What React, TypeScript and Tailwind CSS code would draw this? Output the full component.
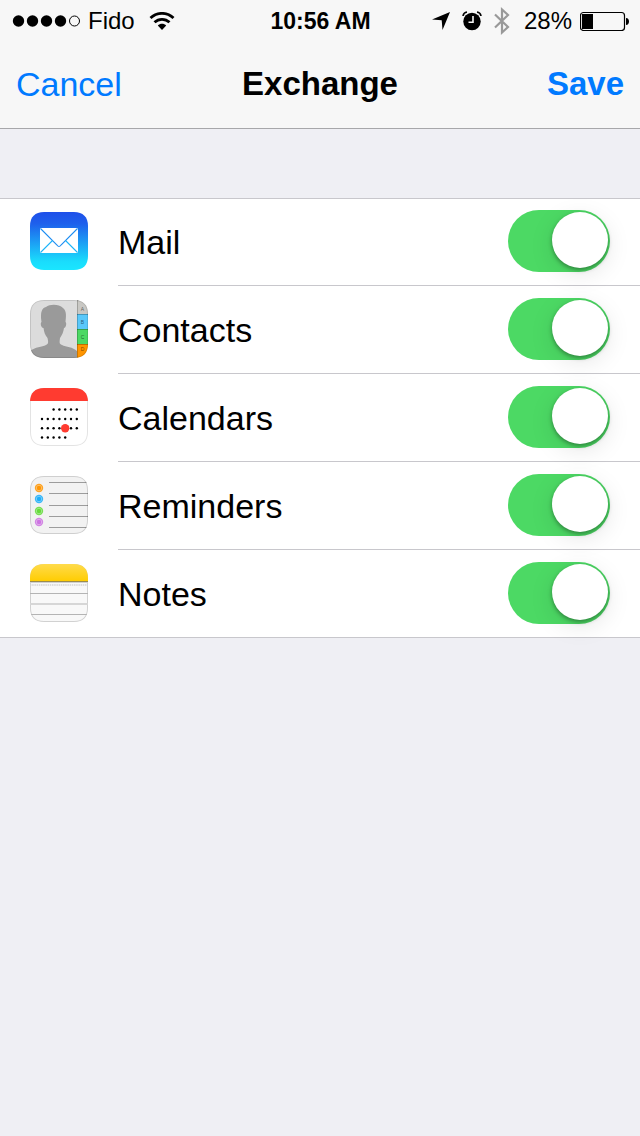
import React from "react";

const TILE =
  "M14 0H44C53 0 58 5 58 14V44C58 53 53 58 44 58H14C5 58 0 53 0 44V14C0 5 5 0 14 0Z";

type TileProps = {
  id: string;
  children: React.ReactNode;
  outline?: string;
};

function Tile({ id, children, outline }: TileProps) {
  return (
    <svg viewBox="0 0 58 58" className="size-[58px]" aria-hidden="true">
      <defs>
        <clipPath id={`${id}-clip`}>
          <path d={TILE} />
        </clipPath>
      </defs>
      <g clipPath={`url(#${id}-clip)`}>
        {children}
        {outline && <path d={TILE} fill="none" stroke={outline} strokeWidth="2" />}
      </g>
    </svg>
  );
}

function MailIcon() {
  return (
    <Tile id="mail">
      <linearGradient id="mail-sky" x1="0" y1="0" x2="0" y2="1">
        <stop offset="0" stopColor="#1e4fe9" />
        <stop offset="0.2" stopColor="#1e60ec" />
        <stop offset="0.85" stopColor="#1adcfc" />
        <stop offset="1" stopColor="#1ae6ff" />
      </linearGradient>
      <rect width="58" height="58" fill="url(#mail-sky)" />
      <rect x="10" y="16" width="38" height="25" rx="1" fill="#fff" />
      <g fill="none" strokeWidth="1.1">
        <path d="M10.5 16.500L27 33Q29 36 31 33L47.500 16.500" stroke="#1f8ef2" />
        <path d="M10.500 40.500L22.500 28.500M47.500 40.500L35.500 28.500" stroke="#1db4f8" />
      </g>
    </Tile>
  );
}

const contactTabs = [
  { letter: "A", y: 0, height: 14, fill: "#c9c8c4", baseline: 11 },
  { letter: "B", y: 14, height: 15, fill: "#5ac8fa", baseline: 24 },
  { letter: "C", y: 29, height: 15, fill: "#4cd964", baseline: 39 },
  { letter: "D", y: 44, height: 14, fill: "#ff9500", baseline: 51 },
];

function ContactsIcon() {
  return (
    <Tile id="contacts" outline="#0000001c">
      <rect width="58" height="58" fill="#dcdcdc" />
      <path
        d="M0 58V51C5 47 12 47 16 45C18.500 44 18.500 42 17.500 38C15 35 14 32 13.500 28C11 28 10 23 11.500 22C10 12 12 8 16 7C20 4 29 4 33 8C37 11 36 17 35.500 22C37 23 36 28 34 28C33.500 32 32 35 30 38C29.500 42 29 44 32 45C36 47 43 47 47 51V58Z"
        fill="#9a9a9a"
      />
      {contactTabs.map((tab) => (
        <g key={tab.letter}>
          <rect x="47" y={tab.y} width="11" height={tab.height} fill={tab.fill} />
          <rect x="47" y={tab.y} width="11" height="1" fill="#00000040" />
          <text
            x="52.500"
            y={tab.baseline}
            fontSize="5"
            textAnchor="middle"
            fill="#00000090"
          >
            {tab.letter}
          </text>
        </g>
      ))}
      <rect x="47" width="1" height="58" fill="#00000033" />
    </Tile>
  );
}

// first and last day column of each week
const calendarWeeks = [
  { y: 21.5, from: 2, to: 6 },
  { y: 31, from: 0, to: 6 },
  { y: 40.3, from: 0, to: 6 },
  { y: 49.5, from: 0, to: 4 },
];

function CalendarsIcon() {
  return (
    <Tile id="calendars">
      <rect width="58" height="58" fill="#fff" />
      <path d={TILE} fill="none" stroke="#0000001c" strokeWidth="2" />
      <rect width="58" height="13" fill="#ff3b30" />
      {calendarWeeks.map((week) =>
        Array.from({ length: week.to - week.from + 1 }, (_, i) => (
          <circle
            key={`${week.y}-${i}`}
            cx={12 + (week.from + i) * 5.8}
            cy={week.y}
            r="1.2"
            fill="#000"
          />
        ))
      )}
      <circle cx="35.200" cy="40.300" r="4.200" fill="#ff3b30" />
    </Tile>
  );
}

const reminderDots = [
  { y: 12, fill: "#ff9500" },
  { y: 23, fill: "#1badf8" },
  { y: 35, fill: "#63da38" },
  { y: 46, fill: "#cc73e1" },
];

function RemindersIcon() {
  return (
    <Tile id="reminders" outline="#00000024">
      <rect width="58" height="58" fill="#f2f2f2" />
      {[6, 17, 29, 40, 51].map((y) => (
        <rect key={y} x="19" y={y} width="39" height="1" fill="#9c9c9c" />
      ))}
      {reminderDots.map((dot) => (
        <g key={dot.y} fill={dot.fill}>
          <circle cx="9" cy={dot.y} r="4.200" opacity="0.85" />
          <circle cx="9" cy={dot.y} r="2.600" fill="none" stroke="#fff" strokeWidth="0.700" opacity="0.5" />
          <circle cx="9" cy={dot.y} r="2.200" opacity="0.9" />
        </g>
      ))}
    </Tile>
  );
}

function NotesIcon() {
  return (
    <Tile id="notes">
      <linearGradient id="notes-pad" x1="0" y1="0" x2="0" y2="1">
        <stop offset="0" stopColor="#ffdb4c" />
        <stop offset="1" stopColor="#ffcd02" />
      </linearGradient>
      <rect width="58" height="58" fill="#f8f8f8" />
      <path d={TILE} fill="none" stroke="#00000028" strokeWidth="2" />
      <rect width="58" height="17" fill="url(#notes-pad)" />
      <rect y="17" width="58" height="1" fill="#9b8c4e" />
      <rect y="18" width="58" height="1" fill="#d0d0d0" />
      <path d="M0 21H58" stroke="#d4d4d4" strokeWidth="1.500" strokeDasharray="1.500 0.700" />
      <rect y="29" width="58" height="1" fill="#b4b4b4" />
      <rect y="39" width="58" height="2" fill="#d6d6d6" />
      <rect y="50" width="58" height="1" fill="#b4b4b4" />
    </Tile>
  );
}

function SignalDots() {
  return (
    <svg viewBox="0 0 68 12" className="h-3 w-[68px]" role="img" aria-label="Signal strength">
      {[6.5, 20.5, 34.5, 48.5].map((cx) => (
        <circle key={cx} cx={cx} cy="6" r="5.700" />
      ))}
      <circle cx="62.500" cy="6" r="5" fill="none" stroke="#000" />
    </svg>
  );
}

function WifiIcon() {
  return (
    <svg viewBox="0 0 26 18" className="h-[18px] w-[26px]" role="img" aria-label="Wi-Fi">
      <g fill="none" stroke="#000" strokeWidth="2.800">
        <path d="M1.500 6C8 -0.200 18 -0.200 24.500 6" />
        <path d="M5.500 10.300C9.800 6.300 16.200 6.300 20.500 10.300" />
      </g>
      <path d="M13 18L8.800 13.400C11 11.200 15 11.200 17.200 13.400Z" />
    </svg>
  );
}

function LocationIcon() {
  return (
    <svg viewBox="0 0 18 18" className="size-[18px]" role="img" aria-label="Location">
      <path d="M18 0L10.500 18L9.700 8.300L0 7.500Z" />
    </svg>
  );
}

function AlarmIcon() {
  return (
    <svg viewBox="0 0 20 20" className="size-5" role="img" aria-label="Alarm">
      <circle cx="10" cy="10.500" r="8.700" />
      <path d="M1 5C1.300 3 3 1.300 5 1M19 5C18.700 3 17 1.300 15 1" fill="none" stroke="#000" strokeWidth="1.600" />
      <path d="M11 5V11.300H6.500" fill="none" stroke="#f7f7f7" strokeWidth="1.600" />
    </svg>
  );
}

function BluetoothIcon() {
  return (
    <svg viewBox="0 0 16 28" className="h-7 w-4" role="img" aria-label="Bluetooth">
      <path
        d="M1 7.500L14 20L8 25.500V2.500L14 8L1 20.500"
        fill="none"
        stroke="#999"
        strokeWidth="2.200"
      />
    </svg>
  );
}

function BatteryIcon() {
  return (
    <svg viewBox="0 0 49 20" className="h-5 w-[49px]" role="img" aria-label="Battery">
      <rect x="0.500" y="1.500" width="44" height="18" rx="3" fill="none" stroke="#000" strokeWidth="1.200" />
      <rect x="2" y="3" width="11" height="15" />
      <path d="M46 7C50 7 50 14 46 14Z" />
    </svg>
  );
}

function StatusBar() {
  return (
    <div className="grid h-10 grid-cols-[1fr_auto_1fr] items-center pl-3 pr-[11px] pt-px text-2xl/10">
      <div className="flex items-center">
        <SignalDots />
        <span className="ml-2">Fido</span>
        <span className="ml-3.5">
          <WifiIcon />
        </span>
      </div>
      <time className="text-[23px]/10 font-bold">10:56 AM</time>
      <div className="flex items-center justify-end">
        <LocationIcon />
        <span className="ml-3">
          <AlarmIcon />
        </span>
        <span className="ml-3">
          <BluetoothIcon />
        </span>
        <span className="ml-3.5">28%</span>
        <span className="ml-2">
          <BatteryIcon />
        </span>
      </div>
    </div>
  );
}

function NavBar() {
  return (
    <div className="grid h-[88px] grid-cols-[1fr_auto_1fr] items-center px-4 text-[34px]/10">
      <button type="button" className="justify-self-start text-[#007aff]">
        Cancel
      </button>
      <h1 className="text-[33px]/10 font-bold">Exchange</h1>
      <button type="button" className="justify-self-end text-[33px]/10 font-bold text-[#007aff]">
        Save
      </button>
    </div>
  );
}

const services = [
  { id: "mail", label: "Mail", icon: <MailIcon /> },
  { id: "contacts", label: "Contacts", icon: <ContactsIcon /> },
  { id: "calendars", label: "Calendars", icon: <CalendarsIcon /> },
  { id: "reminders", label: "Reminders", icon: <RemindersIcon /> },
  { id: "notes", label: "Notes", icon: <NotesIcon /> },
];

function App() {
  return (
    <div className="min-h-screen bg-[#efeff4] font-['Liberation_Sans',Arial,sans-serif] text-black">
      <header className="border-b border-[#a7a7aa] bg-[#f7f7f7]">
        <StatusBar />
        <NavBar />
      </header>
      <main className="pt-[69px]">
        <ul className="bg-white shadow-[inset_0_1px_0_#c8c7cc,inset_0_-1px_0_#c8c7cc]">
          {services.map((service) => (
            <li key={service.id} className="group flex h-[88px] pl-[30px]">
              <div className="flex items-center pb-0.5">{service.icon}</div>
              <div className="ml-[30px] flex grow items-center justify-between border-b border-[#c8c7cc] pb-px pr-[30px] group-last:border-transparent">
                <label htmlFor={service.id} className="pt-0.5 text-[34px]/10">
                  {service.label}
                </label>
                <input
                  id={service.id}
                  type="checkbox"
                  role="switch"
                  defaultChecked
                  className="h-[62px] w-[102px] appearance-none rounded-full bg-[#e5e5ea] p-0.5 before:block before:size-14 before:rounded-full before:bg-white before:shadow-[0_2px_4px_rgba(0,0,0,0.35),0_6px_24px_rgba(0,0,0,0.1)] before:transition-transform checked:bg-[#4cd964] checked:before:translate-x-[42px]"
                />
              </div>
            </li>
          ))}
        </ul>
      </main>
    </div>
  );
}

export default App;
